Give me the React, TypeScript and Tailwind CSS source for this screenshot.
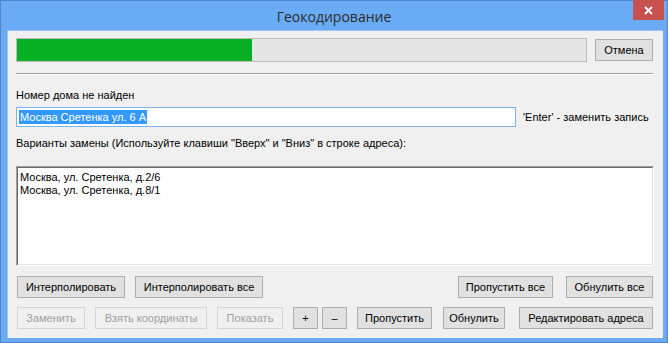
import React from "react";

const Btn = ({ label, w, disabled = false }: { label: string; w: number; disabled?: boolean }) => (
  <div
    style={{ width: w }}
    className={
      "h-[22px] flex items-center justify-center border text-[11px] leading-none " +
      (disabled
        ? "border-[#d5d5d5] bg-[#f0f0f0] text-[#a0a0a0]"
        : "border-[#adadad] bg-[#e1e1e1] text-black")
    }
  >
    {label}
  </div>
);

export default function App() {
  return (
    <div
      className="w-[668px] h-[343px] bg-[#6aabf5] border border-[#4f86c9] flex flex-col"
      style={{ fontFamily: '"Liberation Sans", Arial, sans-serif' }}
    >
      <div className="h-[29px] relative flex items-center justify-center">
        <span
          className="text-[14px] text-[#2b2b2b] mt-[2px]"
          style={{ fontFamily: '"Open Sans", "Noto Sans", sans-serif' }}
        >
          Геокодирование
        </span>
        <div className="absolute right-[3px] top-[-1px] w-[31px] h-[20px] bg-[#c75050] flex items-center justify-center">
          <svg width="9" height="9" viewBox="0 0 9 9">
            <path d="M1 1L8 8M8 1L1 8" stroke="white" strokeWidth="1.8" />
          </svg>
        </div>
      </div>
      <div className="ml-[6px] mr-[4px] mb-[4px] flex-1 bg-[#f0f0f0] border-l border-t border-[#9cc4f2] pl-[8px] pr-[10px] pt-[7px] flex flex-col text-[11px] text-black">
        <div className="flex items-center">
          <div className="w-[571px] h-[24px] border border-[#bcbcbc] bg-[#e6e6e6]">
            <div className="w-[235px] h-full bg-[#06b025]" />
          </div>
          <div className="ml-[8px]">
            <Btn label="Отмена" w={58} />
          </div>
        </div>
        <div className="mt-[11px] h-px bg-[#a0a0a0]" />
        <div className="h-px bg-white" />
        <div className="mt-[14px] leading-[13px]">Номер дома не найден</div>
        <div className="mt-[5px] flex items-center">
          <div className="w-[500px] h-[20px] border border-[#7eb4ea] bg-white flex items-center pl-[2px]">
            <span className="bg-[#3399ff] text-white leading-[14px] px-px">Москва Сретенка ул. 6 А</span>
          </div>
          <span className="ml-[7px]">'Enter' - заменить запись</span>
        </div>
        <div className="mt-[10px] leading-[13px]">
          Варианты замены (Используйте клавиши "Вверх" и "Вниз" в строке адреса):
        </div>
        <div className="mt-[16px] w-[638px] h-[100px] border border-t-[#a0a0a0] border-l-[#a0a0a0] border-r-white border-b-white">
          <div className="w-full h-full border border-t-[#696969] border-l-[#696969] border-r-[#e3e3e3] border-b-[#e3e3e3] bg-white px-[2px] pt-[3px] leading-[13px]">
            <div>Москва, ул. Сретенка, д.2/6</div>
            <div>Москва, ул. Сретенка, д.8/1</div>
          </div>
        </div>
        <div className="mt-[10px] flex pl-px">
          <Btn label="Интерполировать" w={108} />
          <div className="ml-[10px]">
            <Btn label="Интерполировать все" w={128} />
          </div>
          <div className="flex-1" />
          <Btn label="Пропустить все" w={95} />
          <div className="ml-[13px]">
            <Btn label="Обнулить все" w={87} />
          </div>
        </div>
        <div className="mt-[9px] flex pl-px gap-[10px]">
          <Btn label="Заменить" w={68} disabled />
          <Btn label="Взять координаты" w={112} disabled />
          <Btn label="Показать" w={66} disabled />
          <div className="flex gap-[4px]">
            <Btn label="+" w={25} />
            <Btn label="–" w={25} />
          </div>
          <Btn label="Пропустить" w={75} />
          <div className="ml-px">
            <Btn label="Обнулить" w={62} />
          </div>
          <div className="ml-[4px]">
            <Btn label="Редактировать адреса" w={134} />
          </div>
        </div>
      </div>
    </div>
  );
}
